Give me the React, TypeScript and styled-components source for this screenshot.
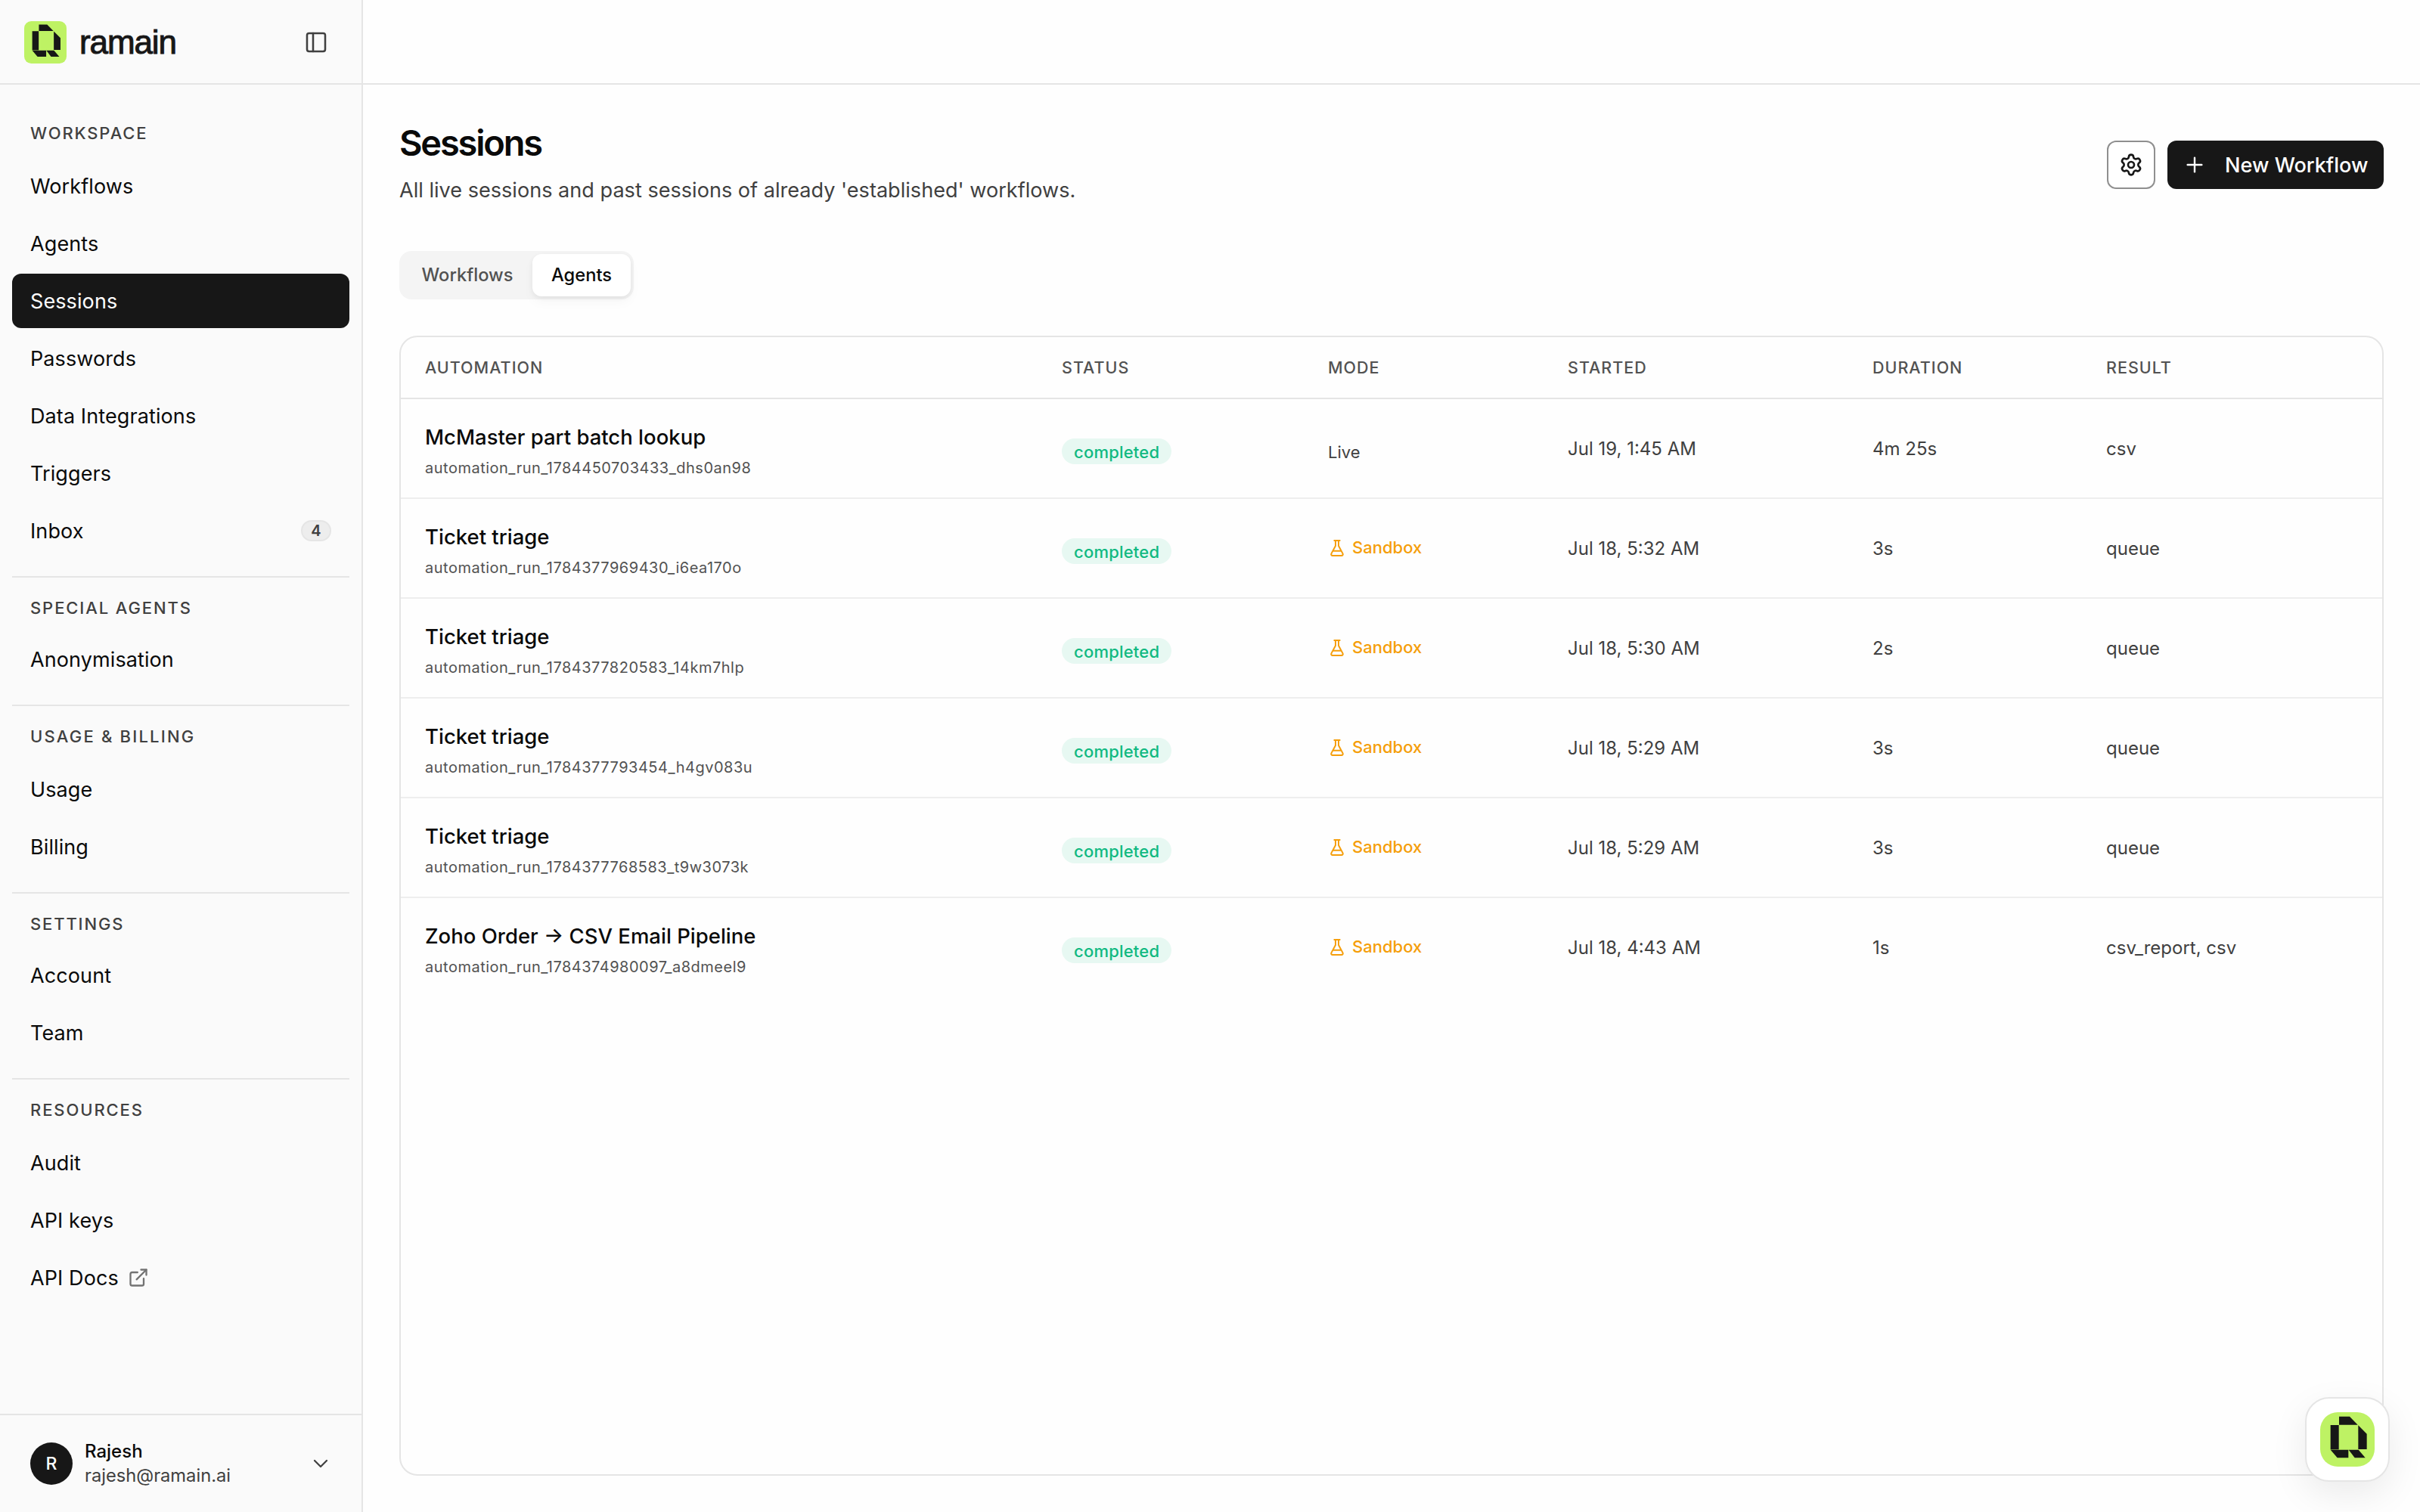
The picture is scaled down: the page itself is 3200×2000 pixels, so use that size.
import React from 'react'
import styled, { createGlobalStyle } from 'styled-components'
import { ChevronDown, ExternalLink, PanelLeft, Plus, Settings } from 'lucide-react'

type NavEntry = { label: string; badge?: string; external?: boolean }
type NavGroup = { title: string; titleHeight: number; spacing: string; items: NavEntry[] }

const NAV_GROUPS: NavGroup[] = [
  {
    title: 'WORKSPACE',
    titleHeight: 74,
    spacing: '1.85px',
    items: [
      { label: 'Workflows' },
      { label: 'Agents' },
      { label: 'Sessions' },
      { label: 'Passwords' },
      { label: 'Data Integrations' },
      { label: 'Triggers' },
      { label: 'Inbox', badge: '4' },
    ],
  },
  { title: 'SPECIAL AGENTS', titleHeight: 72, spacing: '1.9px', items: [{ label: 'Anonymisation' }] },
  {
    title: 'USAGE & BILLING',
    titleHeight: 74,
    spacing: '2.2px',
    items: [{ label: 'Usage' }, { label: 'Billing' }],
  },
  { title: 'SETTINGS', titleHeight: 72, spacing: '1.85px', items: [{ label: 'Account' }, { label: 'Team' }] },
  {
    title: 'RESOURCES',
    titleHeight: 74,
    spacing: '1.9px',
    items: [{ label: 'Audit' }, { label: 'API keys' }, { label: 'API Docs', external: true }],
  },
]

const ACTIVE_ITEM = 'Sessions'

const COLUMNS = ['AUTOMATION', 'STATUS', 'MODE', 'STARTED', 'DURATION', 'RESULT']

const RUNS = [
  {
    name: 'McMaster part batch lookup',
    id: 'automation_run_1784450703433_dhs0an98',
    sandbox: false,
    started: 'Jul 19, 1:45 AM',
    duration: '4m 25s',
    result: 'csv',
  },
  {
    name: 'Ticket triage',
    id: 'automation_run_1784377969430_i6ea170o',
    sandbox: true,
    started: 'Jul 18, 5:32 AM',
    duration: '3s',
    result: 'queue',
  },
  {
    name: 'Ticket triage',
    id: 'automation_run_1784377820583_14km7hlp',
    sandbox: true,
    started: 'Jul 18, 5:30 AM',
    duration: '2s',
    result: 'queue',
  },
  {
    name: 'Ticket triage',
    id: 'automation_run_1784377793454_h4gv083u',
    sandbox: true,
    started: 'Jul 18, 5:29 AM',
    duration: '3s',
    result: 'queue',
  },
  {
    name: 'Ticket triage',
    id: 'automation_run_1784377768583_t9w3073k',
    sandbox: true,
    started: 'Jul 18, 5:29 AM',
    duration: '3s',
    result: 'queue',
  },
  {
    name: 'Zoho Order → CSV Email Pipeline',
    id: 'automation_run_1784374980097_a8dmeel9',
    sandbox: true,
    started: 'Jul 18, 4:43 AM',
    duration: '1s',
    result: 'csv_report, csv',
  },
]

const LogoMark = ({ size, radius }: { size: number; radius: number }) => (
  <svg width={size} height={size} viewBox="0 0 216 216">
    <rect width="216" height="216" rx={radius} fill="#bef264" />
    <g fill="#171717">
      <path d="M75 17H117L149 50H75Z" />
      <path d="M41 51H74V148H41Z" />
      <path d="M151 52L185 86V147H151Z" />
      <path d="M41 149H112V181H68Z" />
      <path d="M113 149H152L179 181H137Z" />
    </g>
  </svg>
)

const FlaskIcon = () => (
  <svg width="24" height="24" viewBox="0 0 24 24" fill="none" stroke="currentColor" strokeWidth="2" strokeLinejoin="round">
    <path d="M7.6 2H16.4M10 2V9L4.4 19.4A1.8 1.8 0 0 0 6 22H18A1.8 1.8 0 0 0 19.6 19.4L14 9V2M6.8 15.7H17.2" />
  </svg>
)

const Sidebar = () => (
  <Aside>
    <Brand>
      <LogoMark size={56} radius={36} />
      <Wordmark>ramain</Wordmark>
      <PanelLeft size={32} color="#404040" strokeWidth={1.9} />
    </Brand>
    <Nav>
      {NAV_GROUPS.map((group) => (
        <Group key={group.title}>
          <GroupTitle $height={group.titleHeight} $spacing={group.spacing}>
            {group.title}
          </GroupTitle>
          {group.items.map((item) => (
            <NavItem key={item.label} $active={item.label === ACTIVE_ITEM}>
              {item.label}
              {item.external && <ExternalLink size={28} color="#737373" strokeWidth={2} />}
              {item.badge && <Count>{item.badge}</Count>}
            </NavItem>
          ))}
        </Group>
      ))}
    </Nav>
    <Account>
      <Avatar>R</Avatar>
      <Identity>
        <strong>Rajesh</strong>
        <span>rajesh@ramain.ai</span>
      </Identity>
      <ChevronDown size={32} color="#404040" strokeWidth={1.7} />
    </Account>
  </Aside>
)

const App = () => {
  return (
    <>
      <GlobalStyle />
      <Shell>
        <Sidebar />
        <Main>
          <TopBar />
          <Content>
            <PageHeader>
              <div>
                <Title>Sessions</Title>
                <Subtitle>All live sessions and past sessions of already 'established' workflows.</Subtitle>
              </div>
              <Actions>
                <IconButton>
                  <Settings size={32} />
                </IconButton>
                <PrimaryButton>
                  <Plus size={32} strokeWidth={1.8} />
                  New Workflow
                </PrimaryButton>
              </Actions>
            </PageHeader>
            <Tabs>
              <Tab $active={false}>Workflows</Tab>
              <Tab $active>Agents</Tab>
            </Tabs>
            <Card>
              <HeadRow>
                {COLUMNS.map((column) => (
                  <span key={column}>{column}</span>
                ))}
              </HeadRow>
              {RUNS.map((run) => (
                <Row key={run.id}>
                  <Automation>
                    <RunName>{run.name}</RunName>
                    <RunId>{run.id}</RunId>
                  </Automation>
                  <div>
                    <Status>completed</Status>
                  </div>
                  {run.sandbox ? (
                    <Sandbox>
                      <FlaskIcon />
                      <span>Sandbox</span>
                    </Sandbox>
                  ) : (
                    <Live>Live</Live>
                  )}
                  <Value>{run.started}</Value>
                  <Value>{run.duration}</Value>
                  <Value>{run.result}</Value>
                </Row>
              ))}
            </Card>
          </Content>
        </Main>
        <Launcher>
          <LogoMark size={72} radius={70} />
        </Launcher>
      </Shell>
    </>
  )
}

export default App

const GlobalStyle = createGlobalStyle`
  * {
    box-sizing: border-box;
  }

  body {
    margin: 0;
    background: #fff;
    color: #0a0a0a;
    font-family: Inter, 'Liberation Sans', sans-serif;
    -webkit-font-smoothing: antialiased;
  }

  button {
    font: inherit;
  }
`

const Shell = styled.div`
  display: flex;
  width: 3200px;
  height: 2000px;
  overflow: hidden;
`

const Aside = styled.aside`
  display: flex;
  flex-direction: column;
  width: 480px;
  flex-shrink: 0;
  background: #fafafa;
  border-right: 2px solid #e5e5e5;
`

const Brand = styled.div`
  display: flex;
  align-items: center;
  height: 112px;
  padding: 2px 44px 0 32px;
  border-bottom: 2px solid #e5e5e5;
`

const Wordmark = styled.span`
  flex: 1;
  margin-left: 17px;
  font-family: 'Liberation Sans', Arial, sans-serif;
  font-size: 44px;
  line-height: 56px;
  letter-spacing: -1.1px;
  color: #171717;
  -webkit-text-stroke: 1px #171717;
`

const Nav = styled.nav`
  flex: 1;
  padding: 24px 16px 0;
`

const Group = styled.section`
  display: flex;
  flex-direction: column;
  gap: 4px;
  padding-bottom: 24px;

  & + & {
    border-top: 2px solid #e5e5e5;
  }
`

const GroupTitle = styled.div<{ $height: number; $spacing: string }>`
  height: ${(props) => props.$height - 4}px;
  padding: 26px 24px 0;
  font-size: 22px;
  font-weight: 500;
  line-height: 28px;
  letter-spacing: ${(props) => props.$spacing};
  color: #404040;
`

const NavItem = styled.a<{ $active: boolean }>`
  display: flex;
  align-items: center;
  gap: 12px;
  height: 72px;
  padding: 0 24px;
  border-radius: 12px;
  font-size: 27px;
  letter-spacing: 0.1px;
  color: ${(props) => (props.$active ? '#fff' : '#0a0a0a')};
  background: ${(props) => (props.$active ? '#171717' : 'transparent')};
`

const Count = styled.span`
  display: flex;
  align-items: center;
  justify-content: center;
  width: 40px;
  height: 28px;
  margin-left: auto;
  border: 2px solid #e5e5e5;
  border-radius: 14px;
  background: #ededed;
  font-size: 20px;
  font-weight: 600;
  color: #404040;
`

const Account = styled.div`
  display: flex;
  align-items: center;
  gap: 16px;
  height: 130px;
  padding: 0 38px 0 40px;
  border-top: 2px solid #e5e5e5;
`

const Avatar = styled.div`
  display: flex;
  align-items: center;
  justify-content: center;
  width: 56px;
  height: 56px;
  border-radius: 50%;
  background: #171717;
  color: #fff;
  font-size: 23px;
  font-weight: 500;
`

const Identity = styled.div`
  display: flex;
  flex: 1;
  flex-direction: column;
  font-size: 24px;
  line-height: 32px;

  > strong {
    font-weight: 500;
  }

  > span {
    font-size: 23.7px;
    color: #404040;
  }
`

const Main = styled.main`
  display: flex;
  flex: 1;
  flex-direction: column;
  background: #fefefe;
`

const TopBar = styled.header`
  height: 112px;
  border-bottom: 2px solid #e5e5e5;
`

const Content = styled.div`
  display: flex;
  flex: 1;
  flex-direction: column;
  padding: 48px;
`

const PageHeader = styled.div`
  display: flex;
  justify-content: space-between;
  height: 172px;
`

const Title = styled.h1`
  margin: 0;
  font-size: 47px;
  font-weight: 600;
  line-height: 58px;
  letter-spacing: -2.2px;
`

const Subtitle = styled.p`
  margin: 14px 0 0;
  font-size: 27.1px;
  line-height: 40px;
  color: #404040;
`

const Actions = styled.div`
  display: flex;
  gap: 16px;
  padding-top: 26px;
`

const IconButton = styled.button`
  display: flex;
  align-items: center;
  justify-content: center;
  width: 64px;
  height: 64px;
  padding: 0;
  border: 2px solid #8f8f8f;
  border-radius: 12px;
  background: #fff;
  color: #171717;
`

const PrimaryButton = styled.button`
  display: flex;
  align-items: center;
  gap: 24px;
  width: 286px;
  height: 64px;
  padding: 0 20px;
  border: 0;
  border-radius: 12px;
  background: #171717;
  color: #fff;
  font-size: 27.1px;
  font-weight: 500;
  white-space: nowrap;

  > svg {
    flex-shrink: 0;
  }
`

const Tabs = styled.div`
  display: flex;
  width: 310px;
  height: 64px;
  padding: 4px;
  border-radius: 16px;
  background: #f4f4f4;
`

const Tab = styled.button<{ $active: boolean }>`
  flex: ${(props) => (props.$active ? '0 0 130px' : '0 0 172px')};
  height: 56px;
  padding: 0 0 1px;
  border: 0;
  border-radius: 12px;
  font-size: 23.7px;
  font-weight: 500;
  color: ${(props) => (props.$active ? '#0a0a0a' : '#525252')};
  background: ${(props) => (props.$active ? '#fff' : 'transparent')};
  box-shadow: ${(props) => (props.$active ? '0 2px 6px rgba(0, 0, 0, 0.06), 0 8px 16px rgba(0, 0, 0, 0.03)' : 'none')};
`

const Card = styled.div`
  flex: 1;
  margin-top: 48px;
  border: 2px solid #e5e5e5;
  border-radius: 24px;
`

const HeadRow = styled.div`
  display: grid;
  grid-template-columns: 842px 352px 317px 403px 309px 1fr;
  align-items: center;
  height: 82px;
  padding-left: 32px;
  border-bottom: 2px solid #e5e5e5;
  font-size: 21.5px;
  font-weight: 500;
  letter-spacing: 1px;
  color: #525252;
`

const Row = styled.div`
  display: grid;
  grid-template-columns: 842px 352px 317px 403px 309px 1fr;
  height: 132px;
  padding-left: 32px;

  & + & {
    border-top: 2px solid #eee;
    margin-top: -2px;
    height: 134px;
  }
`

const Automation = styled.div`
  display: flex;
  flex-direction: column;
  padding-top: 30px;
`

const RunName = styled.div`
  font-size: 27.5px;
  font-weight: 500;
  line-height: 40px;
`

const RunId = styled.div`
  margin-top: 7px;
  font-size: 20px;
  line-height: 28px;
  letter-spacing: 0.5px;
  color: #525252;
`

const Status = styled.div`
  display: inline-flex;
  align-items: center;
  height: 34px;
  margin-top: 52px;
  padding: 1px 16px 0;
  border-radius: 17px;
  background: #e7f8f2;
  font-size: 22px;
  font-weight: 500;
  letter-spacing: 0.2px;
  color: #10b981;
`

const Live = styled.div`
  padding-top: 54px;
  font-size: 22px;
  line-height: 32px;
  color: #404040;
`

const Sandbox = styled.div`
  display: flex;
  align-items: center;
  gap: 8px;
  height: 32px;
  margin-top: 49px;
  font-size: 22px;
  font-weight: 500;
  color: #f59e0b;

  > span {
    padding-bottom: 2px;
  }
`

const Value = styled.div`
  padding-top: 50px;
  font-size: 24px;
  line-height: 32px;
  color: #404040;
`

/* floats over the bottom right corner of the card */
const Launcher = styled.button`
  position: fixed;
  right: 40px;
  bottom: 40px;
  display: flex;
  align-items: center;
  justify-content: center;
  width: 112px;
  height: 112px;
  padding: 0;
  border: 2px solid #e5e5e5;
  border-radius: 32px;
  background: #fff;
  box-shadow: 0 16px 48px rgba(0, 0, 0, 0.08);
`
